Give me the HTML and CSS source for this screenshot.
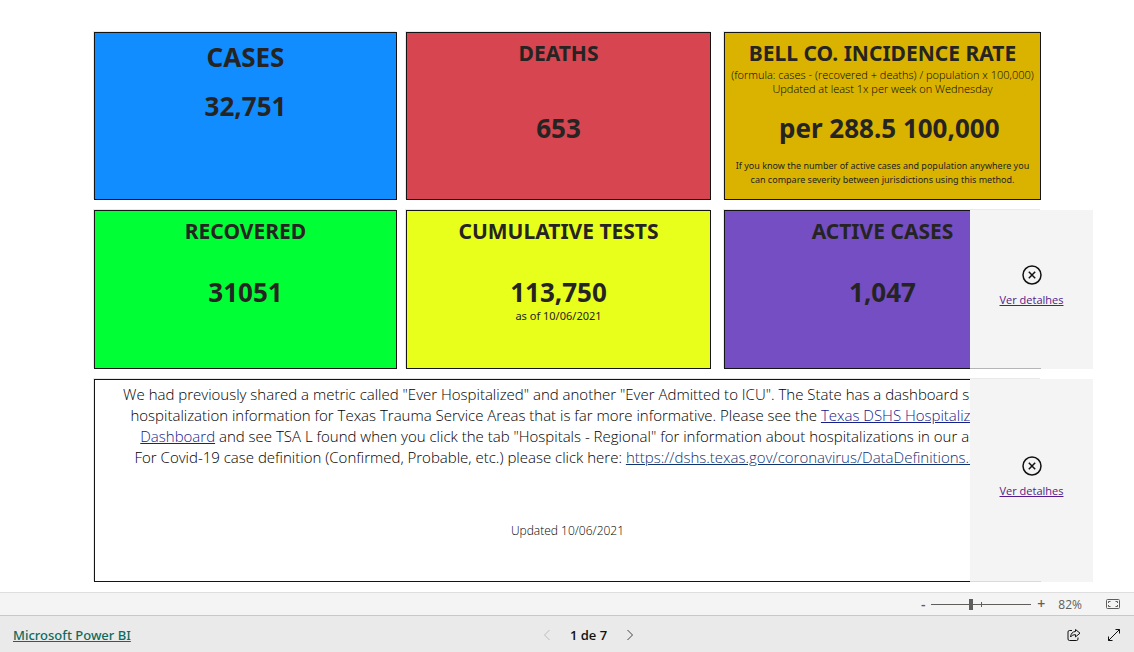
FILE: index.html
```html
<!DOCTYPE html>
<html lang="pt">
<head>
<meta charset="utf-8">
<title>Microsoft Power BI</title>
<link rel="stylesheet" href="styles.css">
</head>
<body>
<main class="report">
  <section class="card card-cases">
    <h2 class="title title-large">CASES</h2>
    <p class="value">32,751</p>
  </section>
  <section class="card card-deaths">
    <h2 class="title">DEATHS</h2>
    <p class="value value-low">653</p>
  </section>
  <section class="card card-rate">
    <h2 class="title">BELL CO. INCIDENCE RATE</h2>
    <p class="formula">(formula: cases - (recovered + deaths) / population x 100,000)<br>Updated at least 1x per week on Wednesday</p>
    <p class="value value-rate">&nbsp; per 288.5 100,000</p>
    <p class="footnote">If you know the number of active cases and population anywhere you<br>can compare severity between jurisdictions using this method.</p>
  </section>
  <section class="card card-recovered">
    <h2 class="title">RECOVERED</h2>
    <p class="value value-mid">31051</p>
  </section>
  <section class="card card-tests">
    <h2 class="title">CUMULATIVE TESTS</h2>
    <p class="value value-mid">113,750</p>
    <p class="date">as of 10/06/2021</p>
  </section>
  <section class="card card-active">
    <h2 class="title">ACTIVE CASES</h2>
    <p class="value value-mid">1,047</p>
    <div class="error">
      <svg class="error-icon" viewBox="0 0 20 20" aria-hidden="true"><circle cx="10" cy="10" r="9"/><path d="M6.8 6.8l6.4 6.4M13.2 6.8l-6.4 6.4"/></svg>
      <a class="error-link" href="#">Ver detalhes</a>
    </div>
  </section>
  <section class="card card-notes">
    <p class="notes">We had previously shared a metric called "Ever Hospitalized" and another "Ever Admitted to ICU". The State has a dashboard sharing<br>hospitalization information for Texas Trauma Service Areas that is far more informative. Please see the <a class="link" href="#">Texas DSHS Hospitalization</a><br><a class="link" href="#">Dashboard</a> and see TSA L found when you click the tab "Hospitals - Regional" for information about hospitalizations in our area.<br>For Covid-19 case definition (Confirmed, Probable, etc.) please click here: <a class="link link-url" href="#">https://dshs.texas.gov/coronavirus/DataDefinitions.aspx</a></p>
    <p class="date date-updated">Updated 10/06/2021</p>
    <div class="error">
      <svg class="error-icon" viewBox="0 0 20 20" aria-hidden="true"><circle cx="10" cy="10" r="9"/><path d="M6.8 6.8l6.4 6.4M13.2 6.8l-6.4 6.4"/></svg>
      <a class="error-link" href="#">Ver detalhes</a>
    </div>
  </section>
</main>
<div class="zoombar">
  <button class="zoom-step" aria-label="Zoom out">-</button>
  <input class="zoom-range" type="range" min="0" max="100" value="39" aria-label="Zoom">
  <button class="zoom-step" aria-label="Zoom in">+</button>
  <span class="zoom-value">82%</span>
  <button class="icon-button" aria-label="Fit to page"><svg class="icon-fit" viewBox="0 0 14 10" aria-hidden="true"><rect x=".5" y=".5" width="13" height="9" rx="1"/><path d="M4.5 2.5h-2v1.500M2.500 6v1.500h2M9.500 2.500h2v1.500M11.500 6v1.500h-2"/></svg></button>
</div>
<footer class="footer">
  <a class="brand" href="#">Microsoft Power BI</a>
  <nav class="pager">
    <button class="icon-button" aria-label="Previous" disabled><svg class="chevron chevron-off" viewBox="0 0 8 12" aria-hidden="true"><path d="M6.500 1L1.500 6l5 5"/></svg></button>
    <span class="page">1 de 7</span>
    <button class="icon-button" aria-label="Next"><svg class="chevron" viewBox="0 0 8 12" aria-hidden="true"><path d="M1.500 1l5 5-5 5"/></svg></button>
  </nav>
  <div class="actions">
    <button class="icon-button" aria-label="Share"><svg class="icon-action" viewBox="0 0 14 14" aria-hidden="true"><path d="M5 2.500H2.500a1.500 1.500 0 0 0-1.500 1.500v7a1.500 1.500 0 0 0 1.500 1.500h7a1.500 1.500 0 0 0 1.500-1.500v-1.500"/><path d="M8.500 1.500v2C5.500 3.700 4 5.500 3.500 9c1.400-1.700 2.800-2.300 5-2.300v2.200L13 5.200z"/></svg></button>
    <button class="icon-button" aria-label="Full screen"><svg class="icon-action" viewBox="0 0 14 14" aria-hidden="true"><path d="M1.500 12.500l11-11M8.500 1.500h4v4M1.500 8.500v4h4"/></svg></button>
  </div>
</footer>
</body>
</html>
```

FILE: styles.css
```css
* { box-sizing: border-box; }
body {
  margin: 0;
  min-height: 100vh;
  display: flex;
  flex-direction: column;
  background: #fff;
  color: #252423;
  font-family: "Noto Sans", "Open Sans", sans-serif;
}
h2, p { margin: 0; }
button { margin: 0; padding: 0; border: 0; background: none; font: inherit; color: inherit; }

.report {
  flex: 1;
  display: grid;
  grid-template-columns: 303fr 305fr 321fr;
  grid-template-rows: 168fr 159fr 203fr;
  gap: 10px 9px;
  padding: 32px 93px 10px 94px;
}
.card {
  position: relative;
  padding: 5px 6px;
  border: 1px solid #141414;
  box-shadow: -1px -1px 0 #e9e9e9;
  text-align: center;
}
.card-cases { background: #118dff; }
.card-deaths { background: #d64550; }
.card-rate { margin-left: 4px; padding: 5px 0; background: #d9b300; }
.card-recovered { background: #01ff35; }
.card-tests { background: #e8ff1c; }
.card-active { margin-left: 4px; background: #744ec2; }
.card-notes { grid-column: 1 / -1; padding-top: 4px; }

.title { font-size: 21px; line-height: 30px; font-weight: 700; }
.title-large { font-size: 26px; line-height: 38px; }
.value { font-size: 26px; line-height: 34px; font-weight: 700; margin-top: 13px; }
.value-low { margin-top: 43px; }
.value-mid { margin-top: 29px; }
.value-rate { margin-top: 15px; }
.formula, .notes, .date-updated {
  font-family: "Open Sans", "Noto Sans", sans-serif;
  font-weight: 300;
  color: #000;
}
.formula { font-size: 11px; line-height: 14px; }
.footnote { font-size: 9px; line-height: 14px; margin-top: 14px; }
.formula, .footnote, .notes { white-space: nowrap; }
.date { font-size: 11px; line-height: 14px; }
.date-updated { font-size: 12px; margin-top: 56px; }
.notes { font-size: 15px; line-height: 21px; }
.link { color: #14208c; }
.link-url { color: #0f3272; }

.error {
  position: absolute;
  top: -1px;
  right: -53px;
  bottom: -1px;
  width: 123px;
  display: flex;
  flex-direction: column;
  align-items: center;
  justify-content: center;
  gap: 8px;
  padding-bottom: 8px;
  background: #f4f4f4;
}
.error::after {
  content: "";
  position: absolute;
  left: 0;
  bottom: 0;
  width: 71px;
  height: 1px;
  background: #b5b5b8;
}
.card-notes .error::after { background: #dadada; }
.error-icon { width: 20px; height: 20px; fill: none; stroke: #111; stroke-width: 1.5; }
.error-link { font-family: "Open Sans", "Noto Sans", sans-serif; font-size: 11px; line-height: 14px; color: #551a8b; }

.zoombar {
  flex: none;
  height: 23px;
  display: flex;
  align-items: center;
  justify-content: flex-end;
  padding-right: 14px;
  border-top: 1px solid #dedede;
  background: #f4f4f4;
  color: #605e5c;
  font-family: "Open Sans", "Noto Sans", sans-serif;
  font-size: 12px;
}
.zoom-step { width: 14px; font-size: 14px; line-height: 20px; font-weight: 600; }
.zoom-range {
  appearance: none;
  width: 100px;
  height: 12px;
  margin: 0 3px 0 1px;
  background:
    linear-gradient(#605e5c, #605e5c) 50px 50% / 1px 5px no-repeat,
    linear-gradient(#605e5c, #605e5c) 0 50% / 100% 1px no-repeat;
}
.zoom-range::-webkit-slider-thumb { appearance: none; width: 4px; height: 11px; background: #605e5c; }
.zoom-value { margin: 0 24px 0 10px; }
.icon-button { display: flex; align-items: center; justify-content: center; }
.icon-fit { width: 14px; height: 10px; fill: none; stroke: #605e5c; }

.footer {
  flex: none;
  height: 37px;
  display: grid;
  grid-template-columns: 1fr auto 1fr;
  align-items: center;
  padding: 2px 13px 0;
  border-top: 1px solid #c8c8c8;
  background: #eaeaea;
}
.brand { justify-self: start; font-size: 13px; line-height: 18px; font-weight: 500; color: #0f6b5c; }
.pager { display: flex; align-items: center; gap: 19px; padding-left: 43px; }
.page { font-family: "Open Sans", "Noto Sans", sans-serif; font-size: 13px; line-height: 18px; font-weight: 600; color: #111; }
.chevron { width: 8px; height: 12px; fill: none; stroke: #444; }
.chevron-off { stroke: #bdbdbd; }
.actions { justify-self: end; display: flex; gap: 26px; }
.icon-action { width: 14px; height: 14px; fill: none; stroke: #111; }
```
